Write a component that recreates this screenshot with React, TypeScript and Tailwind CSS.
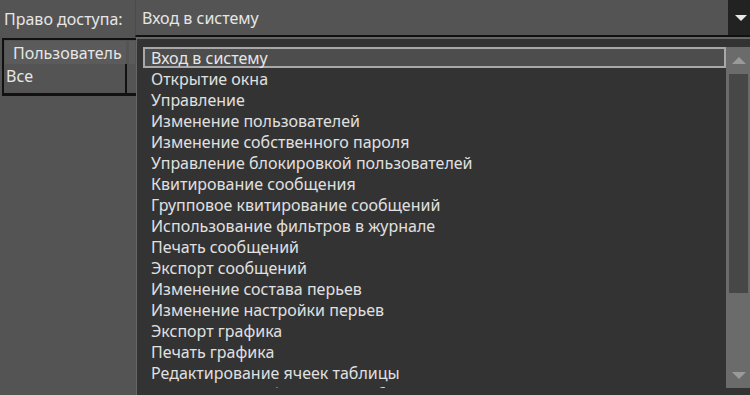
import React from "react";

const items = [
  "Вход в систему",
  "Открытие окна",
  "Управление",
  "Изменение пользователей",
  "Изменение собственного пароля",
  "Управление блокировкой пользователей",
  "Квитирование сообщения",
  "Групповое квитирование сообщений",
  "Использование фильтров в журнале",
  "Печать сообщений",
  "Экспорт сообщений",
  "Изменение состава перьев",
  "Изменение настройки перьев",
  "Экспорт графика",
  "Печать графика",
  "Редактирование ячеек таблицы",
  "Изменение конфигурации таблицы",
];

export default function App() {
  return (
    <div className="relative w-[750px] h-[395px] overflow-hidden bg-[#545454] text-[#e6e6e6] text-[16px] font-['Noto_Sans','Open_Sans',sans-serif]">
      {/* Top row */}
      <div className="flex h-[37px]">
        <div className="w-[135px] pl-[4px] flex items-center leading-none">Право доступа:</div>
        <div className="flex-1 flex border-l border-[#4a4a4a] border-b-2 border-b-[#111]">
          <div className="flex-1 flex items-center pl-[6px] leading-none">Вход в систему</div>
          <div className="w-[22px] bg-[#222] flex items-center justify-center">
            <svg width="12" height="6" viewBox="0 0 12 6" className="ml-[4px]">
              <polygon points="0,0 12,0 6,6" fill="#e8e8e8" />
            </svg>
          </div>
        </div>
      </div>

      {/* Left table */}
      <div className="ml-[2px] mt-[1px] w-[160px] h-[58px] border-2 border-[#111] border-b-[3px] flex flex-col">
        <div className="flex h-[23px] mt-[1px] ml-[1px]">
          <div className="w-[121px] bg-[#5b5b5b] pl-[8px] flex items-center leading-none">Пользователь</div>
          <div className="w-[3px]" />
          <div className="w-[6px] bg-[#5b5b5b]" />
        </div>
        <div className="flex flex-1">
          <div className="w-[123px] border-r-2 border-[#111] pl-[2px] leading-none pt-[4px]">Все</div>
        </div>
      </div>

      {/* Dropdown popup */}
      <div className="absolute left-[136px] top-[37px] right-0 bottom-0 bg-[#333333] border-t-2 border-l border-[#666] flex pt-[8px] pb-[7px] pl-[6px]">
        <div className="flex-1 flex flex-col overflow-hidden">
          {items.map((t, i) => (
            <div
              key={t}
              className={
                i === 0
                  ? "h-[21px] shrink-0 border-2 border-[#a8a8a8] bg-[#4d4d4d] pl-[6px] flex items-center leading-none whitespace-nowrap"
                  : "h-[21px] shrink-0 pl-[8px] flex items-center leading-none whitespace-nowrap text-[#e0e0e0]"
              }
            >
              {t}
            </div>
          ))}
        </div>
        <div className="w-[24px] bg-[#6b6b6b] flex flex-col items-center shrink-0">
          <svg width="14" height="7" viewBox="0 0 14 7" className="mt-[10px] ml-[1px]">
            <polygon points="0,7 14,7 7,0" fill="#9a9a9a" />
          </svg>
          <div className="mt-[10px] w-[19px] h-[219px] bg-[#474747] ml-[1px]" />
          <div className="flex-1" />
          <svg width="14" height="7" viewBox="0 0 14 7" className="mb-[9px] ml-[1px]">
            <polygon points="0,0 14,0 7,7" fill="#9a9a9a" />
          </svg>
        </div>
      </div>
    </div>
  );
}
